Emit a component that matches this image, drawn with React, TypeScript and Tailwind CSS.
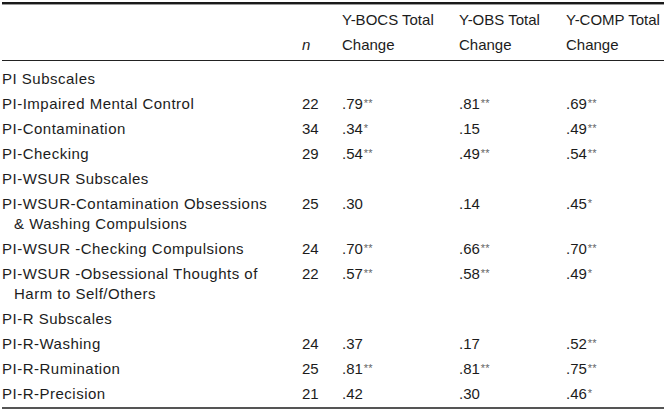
import React from "react";

type Cell = { v: string; sig?: string };
type Row = {
  label: string[];
  n?: string;
  cells?: Cell[];
};

const rows: Row[] = [
  { label: ["PI Subscales"] },
  {
    label: ["PI-Impaired Mental Control"],
    n: "22",
    cells: [{ v: ".79", sig: "**" }, { v: ".81", sig: "**" }, { v: ".69", sig: "**" }],
  },
  {
    label: ["PI-Contamination"],
    n: "34",
    cells: [{ v: ".34", sig: "*" }, { v: ".15" }, { v: ".49", sig: "**" }],
  },
  {
    label: ["PI-Checking"],
    n: "29",
    cells: [{ v: ".54", sig: "**" }, { v: ".49", sig: "**" }, { v: ".54", sig: "**" }],
  },
  { label: ["PI-WSUR Subscales"] },
  {
    label: ["PI-WSUR-Contamination Obsessions", "& Washing Compulsions"],
    n: "25",
    cells: [{ v: ".30" }, { v: ".14" }, { v: ".45", sig: "*" }],
  },
  {
    label: ["PI-WSUR -Checking Compulsions"],
    n: "24",
    cells: [{ v: ".70", sig: "**" }, { v: ".66", sig: "**" }, { v: ".70", sig: "**" }],
  },
  {
    label: ["PI-WSUR -Obsessional Thoughts of", "Harm to Self/Others"],
    n: "22",
    cells: [{ v: ".57", sig: "**" }, { v: ".58", sig: "**" }, { v: ".49", sig: "*" }],
  },
  { label: ["PI-R Subscales"] },
  {
    label: ["PI-R-Washing"],
    n: "24",
    cells: [{ v: ".37" }, { v: ".17" }, { v: ".52", sig: "**" }],
  },
  {
    label: ["PI-R-Rumination"],
    n: "25",
    cells: [{ v: ".81", sig: "**" }, { v: ".81", sig: "**" }, { v: ".75", sig: "**" }],
  },
  {
    label: ["PI-R-Precision"],
    n: "21",
    cells: [{ v: ".42" }, { v: ".30" }, { v: ".46", sig: "*" }],
  },
];

const cols = "grid grid-cols-[300px_40px_117px_107px_1fr]";

const Value = ({ cell }: { cell: Cell }) => (
  <span>
    {cell.v}
    {cell.sig && (
      <span className="text-[11px] leading-none text-[#666] relative top-[-2px] ml-[1px]">
        {cell.sig}
      </span>
    )}
  </span>
);

const App = () => {
  return (
    <div
      className="w-[667px] h-[412px] overflow-hidden bg-white text-[#1c1c1c] text-[15px] pt-[2px]"
      style={{ fontFamily: '"Liberation Sans", Arial, sans-serif' }}
    >
      <div className="ml-[2px] w-[662px]">
        <div className="border-t-2 border-[#1a1a1a]" />
        <div className="border-t border-[#9a9a9a]" />

        {/* header */}
        <div className={`${cols} leading-[25px] pt-[2px] pb-[3px] border-b border-[#222]`}>
          <div />
          <div className="flex items-end italic">n</div>
          <div>
            Y-BOCS Total
            <br />
            Change
          </div>
          <div>
            Y-OBS Total
            <br />
            Change
          </div>
          <div>
            Y-COMP Total
            <br />
            Change
          </div>
        </div>

        {/* body */}
        <div className="pt-[5px] pb-[1px] border-b-2 border-[#555]">
          {rows.map((row, i) => (
            <div key={i} className={`${cols} leading-[20px] py-[2.5px]`}>
              <div className="tracking-[0.5px]">
                {row.label.map((l, j) => (
                  <div key={j} className={j > 0 ? "pl-[12px]" : ""}>
                    {l}
                  </div>
                ))}
              </div>
              <div>{row.n}</div>
              {row.cells?.map((c, k) => (
                <div key={k}>
                  <Value cell={c} />
                </div>
              ))}
            </div>
          ))}
        </div>
      </div>
    </div>
  );
};

export default App;
